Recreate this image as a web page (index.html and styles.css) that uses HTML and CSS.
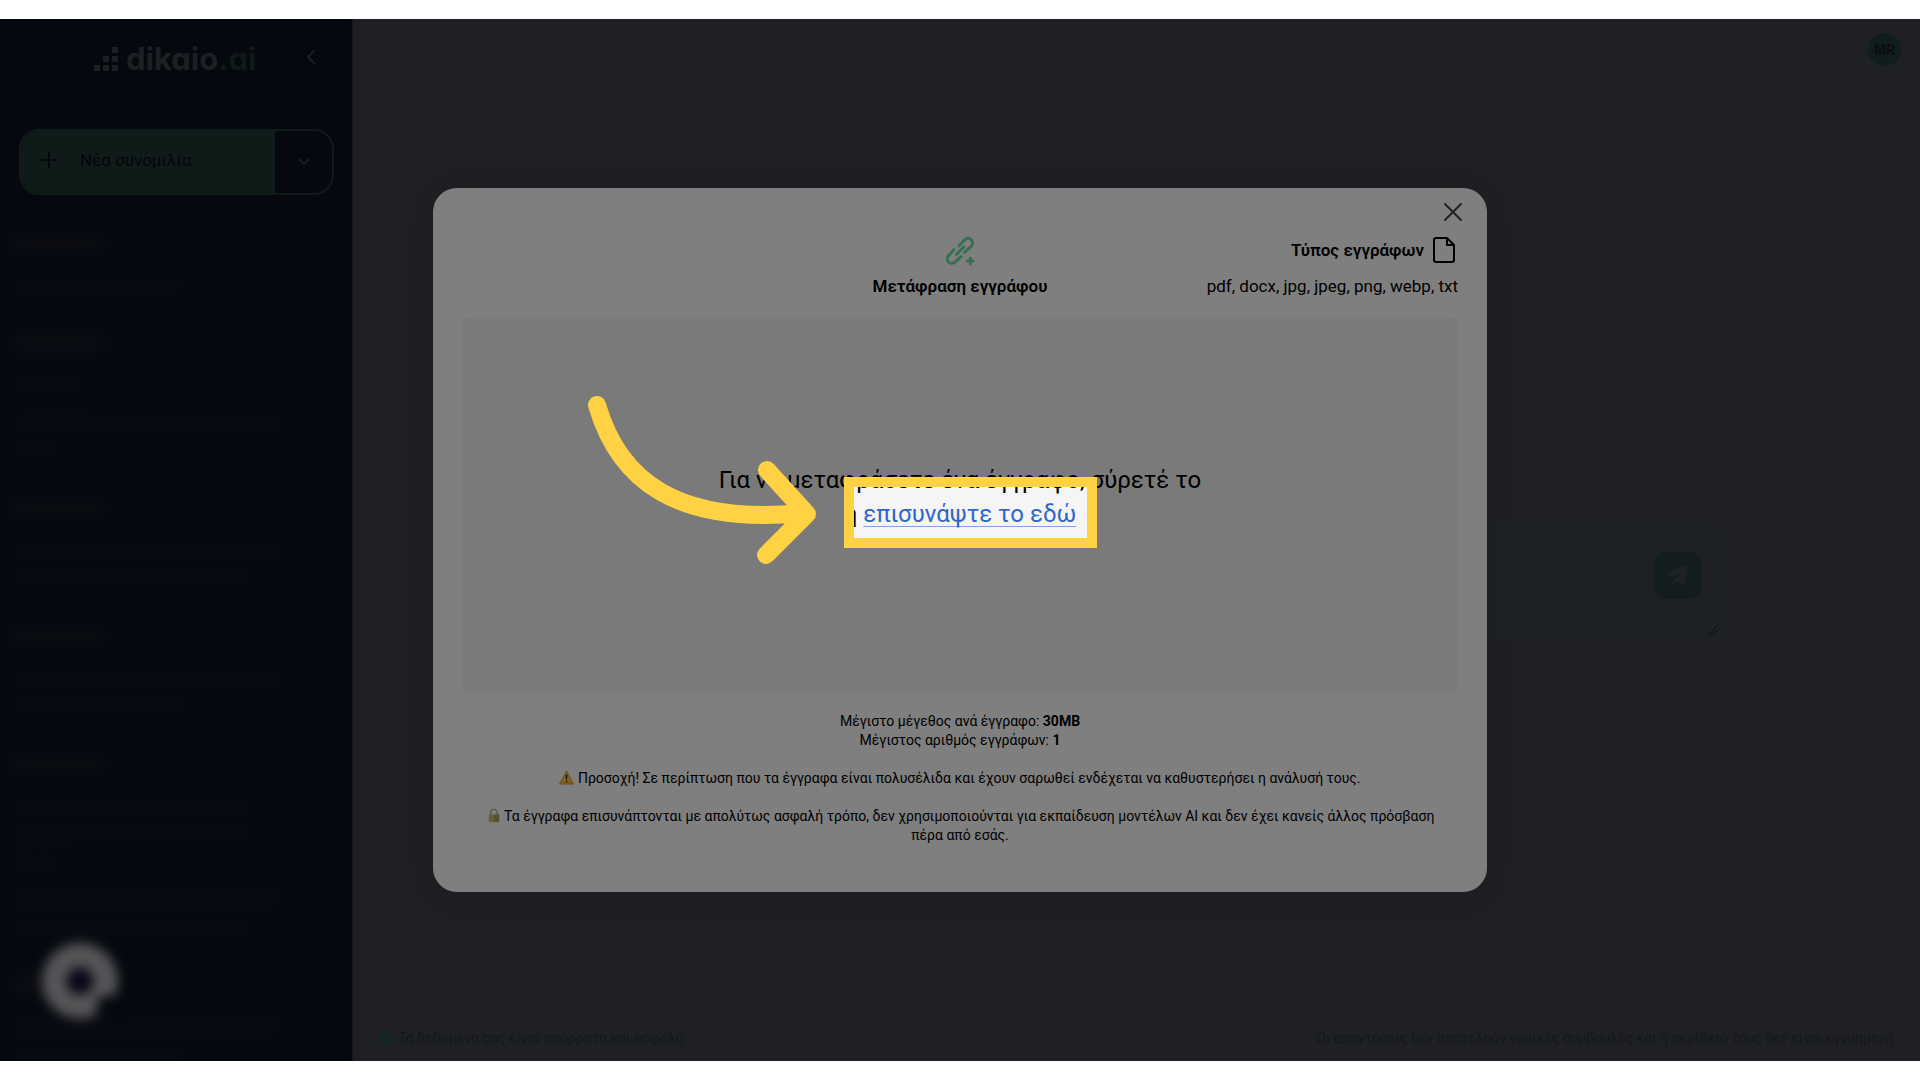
FILE: index.html
```html
<!DOCTYPE html>
<html lang="el">
<head>
<meta charset="utf-8">
<meta name="viewport" content="width=device-width, initial-scale=1">
<title>dikaio.ai</title>
<link rel="stylesheet" href="styles.css">
</head>
<body>
<div class="stage">
  <div class="app">
    <aside class="sidebar">
      <div class="brand-row">
        <a class="brand" href="#">
          <svg class="brand-mark" viewBox="0 0 24 24" aria-hidden="true"><path d="M18 0h6v6h-6zM9 9h6v6H9zM18 9h6v6h-6zM0 18h6v6H0zM9 18h6v6H9zM18 18h6v6h-6z"/></svg>
          <span class="brand-name">dikaio<span class="brand-tld">.ai</span></span>
        </a>
        <button class="collapse" type="button" aria-label="Σύμπτυξη">
          <svg viewBox="0 0 10 16" aria-hidden="true"><path d="M9 1 2 8l7 7"/></svg>
        </button>
      </div>
      <div class="new-chat">
        <button class="new-chat-main" type="button">
          <svg viewBox="0 0 16 16" aria-hidden="true"><path d="M8 0v16M0 8h16"/></svg>
          Νέα συνομιλία
        </button>
        <button class="new-chat-more" type="button" aria-label="Περισσότερα">
          <svg viewBox="0 0 12 8" aria-hidden="true"><path d="m1 1 5 5 5-5"/></svg>
        </button>
      </div>
      <div class="history" aria-hidden="true">
        <div class="group"><i class="head"></i><div class="item"><i class="w-m"></i></div></div>
        <div class="group"><i class="head"></i><div class="item"><i class="w-s"></i></div><div class="item"><i class="w-xl"></i><i class="w-xs"></i></div></div>
        <div class="group"><i class="head"></i><div class="item"><i class="w-xl"></i><i class="w-l"></i></div></div>
        <div class="group"><i class="head"></i><div class="item"><i class="w-xl"></i><i class="w-m"></i></div></div>
        <div class="group"><i class="head"></i><div class="item"><i class="w-l"></i><i class="w-l"></i><i class="w-xs"></i></div><div class="item"><i class="w-xl"></i><i class="w-l"></i></div></div>
        <div class="group"><i class="head"></i><div class="item"><i class="w-xl"></i><i class="w-m"></i></div></div>
      </div>
      <div class="bubble" aria-hidden="true">
        <svg viewBox="0 0 80 80"><circle cx="40" cy="40" r="38" fill="#acacb0"/><circle cx="40" cy="40" r="14" fill="#141030"/><circle cx="68" cy="66" r="12" fill="#0b101c"/></svg>
      </div>
    </aside>
    <main class="main">
      <header class="topbar"><button class="avatar" type="button">MR</button></header>
      <form class="composer">
        <textarea aria-label="Μήνυμα"></textarea>
        <button class="send" type="button" aria-label="Αποστολή">
          <svg viewBox="0 0 22 22" aria-hidden="true"><path d="M21 1 0 8l1 4 5 1 12-9-10 10-3 7 6-4 5 4h1z"/></svg>
        </button>
        <svg class="grip" viewBox="0 0 12 12" aria-hidden="true"><path d="M1 11 11 1M6 11l5-5"/></svg>
      </form>
      <footer class="footer">
        <span class="secure"><svg viewBox="0 0 12 14" aria-hidden="true"><path fill-rule="evenodd" d="M6 0 12 2v5c0 3-2 6-6 7-4-1-6-4-6-7V2zM3 6v4h6V6H8a2 2 0 0 0-4 0z"/></svg>Τα δεδομένα σας είναι απόρρητα και ασφαλή</span>
        <span>Οι απαντήσεις δεν αποτελούν νομικές συμβουλές και η ακρίβειά τους δεν είναι εγγυημένη</span>
      </footer>
    </main>
  </div>

  <div class="overlay">
    <section class="modal" role="dialog" aria-labelledby="modal-title">
      <button class="close" type="button" aria-label="Κλείσιμο">
        <svg viewBox="0 0 18 18" aria-hidden="true"><path d="m1 1 16 16M17 1 1 17"/></svg>
      </button>
      <div class="modal-head">
        <div class="modal-title">
          <svg viewBox="0 0 32 32" aria-hidden="true">
            <g fill="none" stroke="#6be0a4" stroke-width="3" stroke-linecap="round" stroke-linejoin="round">
              <path d="M15 11.700 21 5.500a4.600 4.600 0 0 1 6.400 6.600L20.500 18.500"/>
              <path d="M9.700 15.700 4.200 21.900a4.600 4.600 0 0 0 6.400 6.500L17 22.700"/>
              <path d="M12.700 20.300 19.700 13"/>
              <path d="M26.300 24v6M23.300 27h6"/>
            </g>
          </svg>
          <h1 id="modal-title">Μετάφραση εγγράφου</h1>
        </div>
        <div class="modal-types">
          <p class="types-label">Τύπος εγγράφων
            <svg viewBox="0 0 22 26" aria-hidden="true"><path d="M3 1h11l7 7v15a2 2 0 0 1-2 2H3a2 2 0 0 1-2-2V3a2 2 0 0 1 2-2zM14 1v7h7"/></svg>
          </p>
          <p class="types-list">pdf, docx, jpg, jpeg, png, webp, txt</p>
        </div>
      </div>
      <div class="dropzone">
        <div class="dropzone-inner">
          <p class="drop-text">Για να μεταφράσετε ένα έγγραφο, σύρετέ το<br>ή <a href="#">επισυνάψτε το εδώ</a></p>
        </div>
      </div>
      <div class="notes">
        <p>Μέγιστο μέγεθος ανά έγγραφο: <b>30MB</b><br>Μέγιστος αριθμός εγγράφων: <b>1</b></p>
        <p><svg viewBox="0 0 16 16" aria-hidden="true"><path d="M8 1 15.500 15H.5z" fill="#fcc430" stroke="#dc9c20" stroke-linejoin="round"/><path d="M7 5h2l-.5 5h-1zM7.200 11.500h1.600v1.600H7.200z" fill="#222"/></svg> Προσοχή! Σε περίπτωση που τα έγγραφα είναι πολυσέλιδα και έχουν σαρωθεί ενδέχεται να καθυστερήσει η ανάλυσή τους.</p>
        <p><svg viewBox="0 0 16 16" aria-hidden="true"><path d="M5 8V5a3.500 3.500 0 0 1 7 0v3" fill="none" stroke="#a8b4bc" stroke-width="1.500"/><path d="M3 7h11v8H3z" fill="#c9bd74"/><path d="M9 7h5v8H9z" fill="#a89c54"/></svg> Τα έγγραφα επισυνάπτονται με απολύτως ασφαλή τρόπο, δεν χρησιμοποιούνται για εκπαίδευση μοντέλων AI και δεν έχει κανείς άλλος πρόσβαση πέρα από εσάς.</p>
      </div>
    </section>
  </div>

  <div class="guide" aria-hidden="true">
    <div class="spotlight"></div>
    <svg class="arrow" viewBox="0 0 232 172"><path d="M12 12C34 88 92 132 218 120M182 77l40 44-41 41"/></svg>
  </div>
</div>
</body>
</html>
```
FILE: styles.css
```css
* { box-sizing: border-box; }

body {
  margin: 0;
  padding: 19px 0;
  background: #fff;
  color: #000;
  font: 17px/24px Roboto, "Noto Sans", sans-serif;
}

p, h1 { margin: 0; }

button, textarea {
  margin: 0;
  padding: 0;
  border: 0;
  background: none;
  color: inherit;
  font: inherit;
}

svg { display: block; fill: none; }

.stage {
  position: relative;
  overflow: hidden;
  min-height: calc(100vh - 38px);
  display: grid;
}

.app, .overlay { grid-area: 1 / 1; }

.app {
  display: grid;
  grid-template-columns: 353px 1fr;
  height: calc(100vh - 38px);
}

/* Sidebar */
.sidebar {
  position: relative;
  overflow: hidden;
  padding: 24px 18px 0 19px;
  background: #0b101e;
  border-right: 1px solid #2a2b34;
}

.brand-row {
  display: flex;
  justify-content: space-between;
  align-items: center;
  height: 32px;
  padding: 0 18px 0 75px;
}

.brand {
  display: flex;
  align-items: center;
  gap: 8px;
  color: #3d3e44;
  text-decoration: none;
}

.brand-mark { width: 24px; height: 24px; fill: currentColor; }

.brand-name {
  font-family: Inter, sans-serif;
  font-size: 31px;
  line-height: 32px;
  font-weight: 700;
  font-feature-settings: "cv11";
}

.brand-tld { color: #1c342f; }

.collapse { padding-bottom: 4px; }
.collapse svg { width: 10px; height: 16px; stroke: #3c3d44; stroke-width: 2; }

.new-chat {
  display: flex;
  height: 66px;
  margin-top: 54px;
  border: 2px solid #1f3633;
  border-radius: 20px;
  overflow: hidden;
}

.new-chat-main {
  flex: 1;
  display: flex;
  align-items: center;
  gap: 23px;
  padding: 0 20px 4px;
  background: #1f3633;
  color: #080c12;
}

.new-chat-main svg { width: 16px; height: 16px; stroke: currentColor; stroke-width: 2; }

.new-chat-more {
  width: 57px;
  display: grid;
  place-items: center;
}

.new-chat-more svg { width: 12px; height: 8px; stroke: #34363e; stroke-width: 2; }

.history {
  display: flex;
  flex-direction: column;
  gap: 28px;
  margin: 35px -7px 0;
  filter: blur(8px);
}

.group { display: flex; flex-direction: column; gap: 7px; }

.history i {
  display: block;
  height: 19px;
  margin: 5px 0;
  background: #111623;
}

.history .head { width: 94px; height: 18px; margin-bottom: 12px; background: #181c27; }

.history .w-xs { width: 48px; }
.history .w-s { width: 72px; }
.history .w-m { width: 172px; }
.history .w-l { width: 240px; }
.history .w-xl { width: 272px; }
.history .item i + i { margin-top: 10px; }

.bubble {
  position: absolute;
  left: 40px;
  bottom: 40px;
  width: 80px;
  height: 80px;
  filter: blur(6px);
}

/* Conversation area */
.main {
  display: flex;
  flex-direction: column;
  justify-content: space-between;
  padding: 14px 19px 11px 28px;
  background: #3f4048;
}

.topbar { display: flex; justify-content: flex-end; }

.avatar {
  width: 33px;
  height: 33px;
  border-radius: 50%;
  background: #1e3a36;
  color: #12191f;
  font-size: 14px;
  font-weight: 500;
}

.composer {
  position: relative;
  display: flex;
  width: calc(100% - 360px);
  height: 114px;
  margin: 76px auto 0;
  padding: 28px 19px;
  background: #3d4349;
  border: 1px solid #2f4248;
  border-radius: 20px;
}

.composer textarea { flex: 1; resize: none; }

.send {
  width: 47px;
  height: 47px;
  display: grid;
  place-items: center;
  border-radius: 10px;
  background: #293b3d;
}

.send svg { width: 22px; height: 22px; fill: #3f444b; }

.grip {
  position: absolute;
  right: 1px;
  bottom: 0;
  width: 12px;
  height: 12px;
  stroke: #14181e;
}

.footer {
  display: flex;
  justify-content: space-between;
  padding: 8px 8px 0 0;
  border-top: 1px solid #3a3b43;
  color: #282f37;
  font-size: 14px;
}

.secure { display: flex; align-items: center; gap: 6px; }
.secure svg { width: 11px; height: 13px; fill: #1a4e44; }

/* Upload dialog */
.overlay {
  display: grid;
  place-items: center;
  padding: 24px;
}

.modal {
  z-index: 1;
  width: 100%;
  max-width: 1054px;
  padding: 15px 29px 47px;
  background: #fff;
  border-radius: 24px;
  box-shadow: 0 4px 24px rgba(30, 40, 50, .25);
}

.close { display: block; margin: 0 -4px 0 auto; }
.close svg { width: 18px; height: 18px; stroke: #444; stroke-width: 2; stroke-linecap: round; }

.modal-head {
  display: grid;
  grid-template-columns: 1fr auto 1fr;
  margin-top: 13px;
}

.modal-title {
  grid-column: 2;
  display: grid;
  justify-items: center;
  gap: 8px;
}

.modal-title svg { width: 32px; height: 32px; }

.modal-title h1, .types-label { font-size: 17px; line-height: 24px; font-weight: 600; }

.modal-types { text-align: right; }

.types-label {
  display: flex;
  justify-content: flex-end;
  align-items: center;
  gap: 9px;
  height: 32px;
  padding-right: 3px;
}

.types-label svg { width: 22px; height: 26px; stroke: #000; stroke-width: 2; }

.types-list { margin-top: 8px; }

.dropzone {
  margin-top: 19px;
  padding: 10px;
  background: #f5f5f5;
  border-radius: 6px;
}

.dropzone-inner {
  display: grid;
  place-items: center;
  min-height: 356px;
  padding-bottom: 16px;
  border: 1px dashed #efefef;
}

.drop-text {
  font-size: 24px;
  line-height: 34px;
  text-align: center;
}

.drop-text a {
  color: #2f66cc;
  text-decoration: underline 1px #7fa2e2;
  text-decoration-skip-ink: none;
  text-underline-offset: 4px;
}

.notes {
  display: grid;
  gap: 19px;
  margin-top: 19px;
  padding: 0 16px;
  font-size: 14px;
  line-height: 19px;
  text-align: center;
}

.notes svg { display: inline-block; width: 15px; height: 15px; vertical-align: -2px; }

/* Guide layer: dims all but the highlighted link */
.guide {
  position: absolute;
  z-index: 2;
  inset: 0;
  pointer-events: none;
}

.spotlight {
  position: absolute;
  left: calc(50% - 116px);
  top: calc(50% - 63px);
  width: 253px;
  height: 71px;
  border: 10px solid #ffd243;
  box-shadow: 0 0 0 2000px rgba(0, 0, 0, .5);
}

.arrow {
  position: absolute;
  left: calc(50% - 375px);
  top: calc(50% - 147px);
  width: 232px;
  height: 172px;
  stroke: #ffd243;
  stroke-width: 18;
  stroke-linecap: round;
  stroke-linejoin: round;
}
```
